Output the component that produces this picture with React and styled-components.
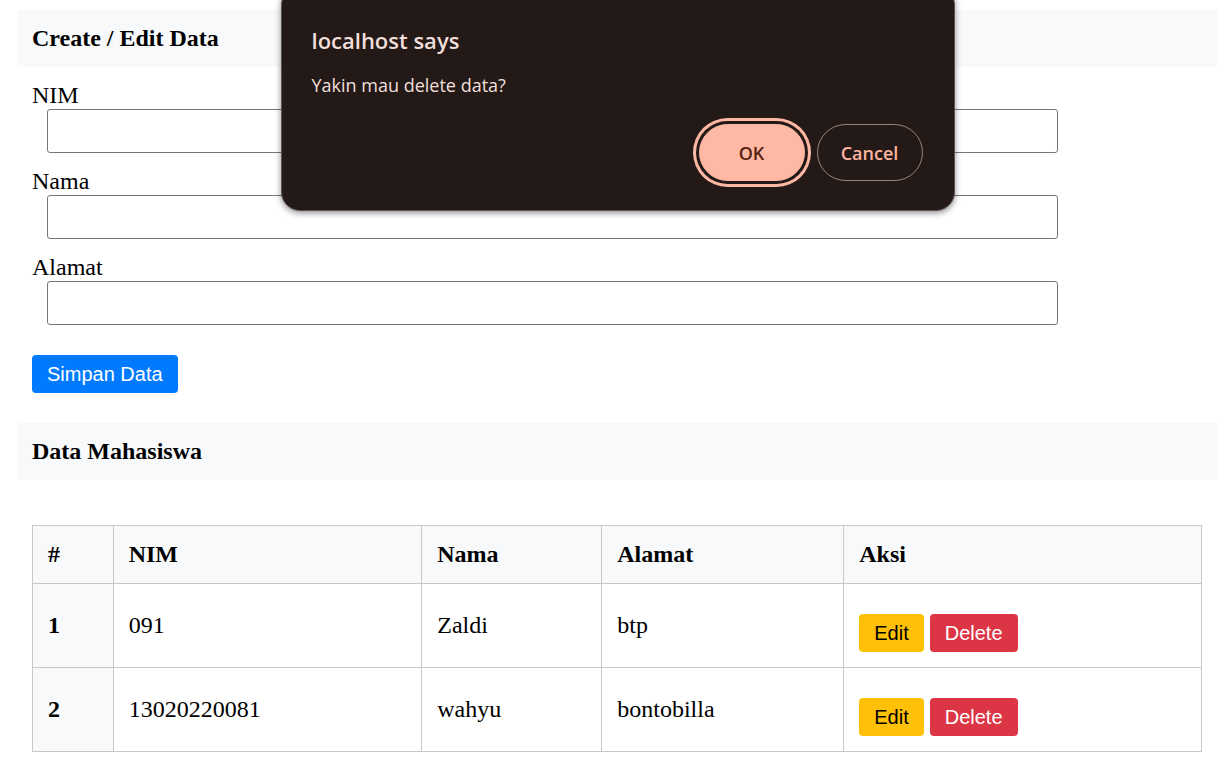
import React from "react";
import styled, { createGlobalStyle } from "styled-components";

const GlobalStyle = createGlobalStyle`
  *, *::before, *::after { box-sizing: border-box; }
  body {
    margin: 0;
    background: #fff;
    color: #000;
    font-family: "Liberation Serif", "Times New Roman", serif;
    font-size: 24px;
    line-height: 27px;
  }
`;

const Page = styled.main`
  position: relative;
  padding: 10px 0 28px 17px;
`;

const SectionTitle = styled.h1`
  margin: 0;
  padding: 15px;
  background: #f8f9fb;
  font-size: 24px;
  font-weight: bold;
`;

const Form = styled.form`
  padding: 15px 15px 30px;
`;

const Field = styled.div`
  margin-bottom: 15px;
`;

const Label = styled.label`
  display: block;
`;

const TextInput = styled.input`
  display: block;
  box-sizing: content-box;
  width: 85%;
  height: 42px;
  margin: 0 0 0 15px;
  padding: 0 7px;
  border: 1px solid #767676;
  border-radius: 3px;
  background: #fff;
  font: inherit;
`;

const palette = {
  primary: ["#007bff", "#fff"],
  warning: ["#ffc107", "#000"],
  danger: ["#dc3545", "#fff"],
};

const Button = styled.button`
  height: 38px;
  margin: 15px 0 0;
  padding: 0 15px;
  border: 0;
  border-radius: 4px;
  background: ${({ $tone }) => palette[$tone][0]};
  color: ${({ $tone }) => palette[$tone][1]};
  font-family: "Liberation Sans", Arial, sans-serif;
  font-size: 20px;
  line-height: 24px;
  cursor: pointer;
`;

const TableSection = styled.div`
  padding: 45px 15px 0;
`;

const Table = styled.table`
  width: 100%;
  table-layout: fixed;
  border-collapse: collapse;
`;

const Col = styled.col`
  width: ${({ $width }) => $width};
`;

const HeadCell = styled.th`
  padding: 15px;
  border: 1px solid #c8c8ca;
  background: #f8f9fb;
  text-align: left;
`;

const Cell = styled.td`
  padding: 15px;
  border: 1px solid #c8c8ca;
`;

const Actions = styled.div`
  display: flex;
  gap: 6px;
`;

const Dialog = styled.div`
  position: absolute;
  top: -14px;
  left: calc(50% + 9px);
  transform: translateX(-50%);
  width: 674px;
  max-width: 100%;
  padding: 38px 31px 29px 30px;
  border: 1px solid #5c5452;
  border-radius: 19px;
  background: #231917;
  box-shadow: 0 2px 6px rgba(0, 0, 0, 0.45);
  color: #f1dfda;
  font-family: "Segoe UI", "Open Sans", sans-serif;
`;

const DialogTitle = styled.h2`
  margin: 0;
  font-size: 22px;
  font-weight: 600;
  line-height: 30px;
`;

const DialogText = styled.p`
  margin: 17px 0 26px;
  font-size: 18px;
  line-height: 26px;
`;

const DialogActions = styled.div`
  display: flex;
  justify-content: flex-end;
  gap: 12px;
`;

const DialogButton = styled.button`
  width: 106px;
  height: 57px;
  padding: 0;
  border: 1px solid ${({ $filled }) => ($filled ? "#ffb8a3" : "#9b837c")};
  border-radius: 29px;
  background: ${({ $filled }) => ($filled ? "#ffb8a3" : "transparent")};
  color: ${({ $filled }) => ($filled ? "#561f0f" : "#ffb5a0")};
  box-shadow: ${({ $filled }) =>
    $filled ? "0 0 0 3px #231917, 0 0 0 6px #ffb8a3" : "none"};
  font-family: inherit;
  font-size: 18px;
  font-weight: 600;
  cursor: pointer;
`;

const fields = [
  { id: "nim", label: "NIM" },
  { id: "nama", label: "Nama" },
  { id: "alamat", label: "Alamat" },
];

const students = [
  { nim: "091", nama: "Zaldi", alamat: "btp" },
  { nim: "13020220081", nama: "wahyu", alamat: "bontobilla" },
];

export default function App() {
  return (
    <>
      <GlobalStyle />
      <Page>
        <SectionTitle>Create / Edit Data</SectionTitle>
        <Form onSubmit={(e) => e.preventDefault()}>
          {fields.map(({ id, label }) => (
            <Field key={id}>
              <Label htmlFor={id}>{label}</Label>
              <TextInput id={id} name={id} type="text" />
            </Field>
          ))}
          <Actions>
            <Button type="submit" $tone="primary">Simpan Data</Button>
          </Actions>
        </Form>

        <SectionTitle as="h2">Data Mahasiswa</SectionTitle>
        <TableSection>
          <Table>
            <colgroup>
              <Col $width="6.9%" />
              <Col $width="26.4%" />
              <Col $width="15.4%" />
              <Col $width="20.7%" />
              <Col />
            </colgroup>
            <thead>
              <tr>
                {["#", "NIM", "Nama", "Alamat", "Aksi"].map((name) => (
                  <HeadCell key={name} scope="col">{name}</HeadCell>
                ))}
              </tr>
            </thead>
            <tbody>
              {students.map(({ nim, nama, alamat }, i) => (
                <tr key={nim}>
                  <HeadCell scope="row">{i + 1}</HeadCell>
                  <Cell>{nim}</Cell>
                  <Cell>{nama}</Cell>
                  <Cell>{alamat}</Cell>
                  <Cell>
                    <Actions>
                      <Button type="button" $tone="warning">Edit</Button>
                      <Button type="button" $tone="danger">Delete</Button>
                    </Actions>
                  </Cell>
                </tr>
              ))}
            </tbody>
          </Table>
        </TableSection>

        <Dialog role="alertdialog" aria-labelledby="dialog-title" aria-describedby="dialog-text">
          <DialogTitle id="dialog-title">localhost says</DialogTitle>
          <DialogText id="dialog-text">Yakin mau delete data?</DialogText>
          <DialogActions>
            <DialogButton type="button" $filled>OK</DialogButton>
            <DialogButton type="button">Cancel</DialogButton>
          </DialogActions>
        </Dialog>
      </Page>
    </>
  );
}
